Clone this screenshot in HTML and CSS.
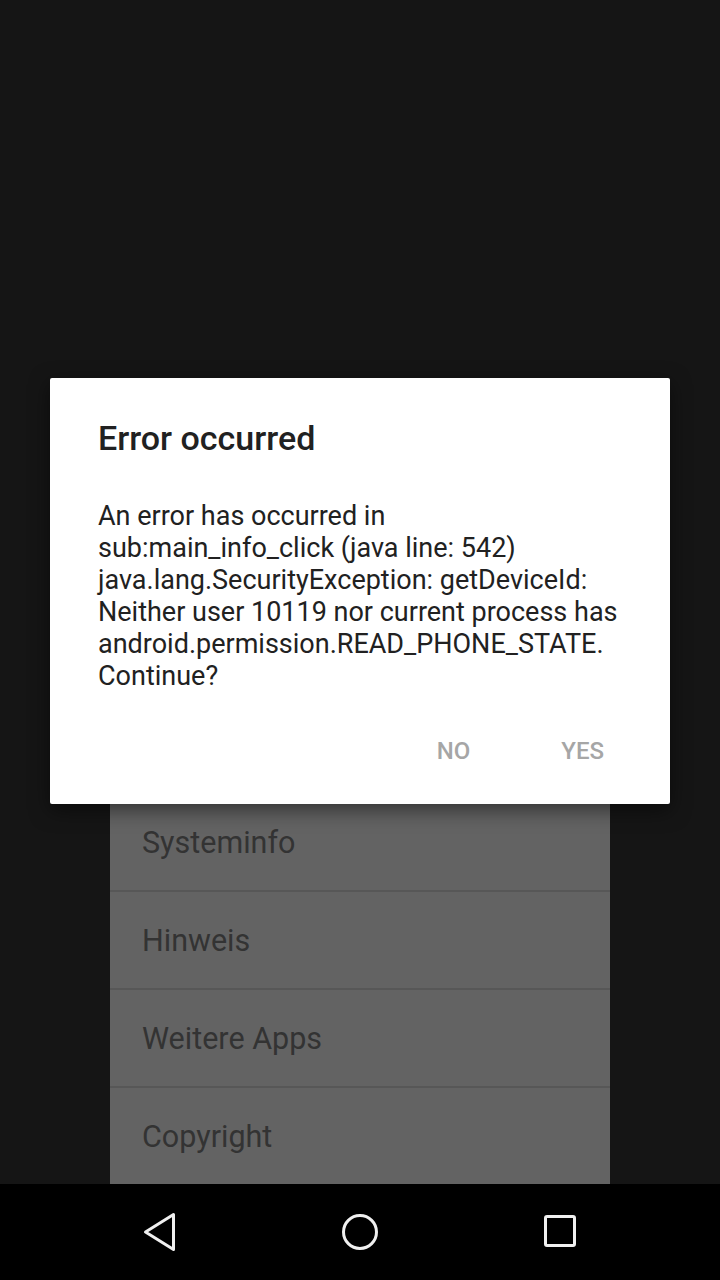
FILE: index.html
```html
<!DOCTYPE html>
<html lang="en">
<head>
    <meta charset="UTF-8">
    <meta name="viewport" content="width=device-width, initial-scale=1.0">
    <title>Error occurred</title>
    <link rel="stylesheet" href="styles.css">
</head>
<body>
    <div class="screen">
        <div class="content">
            <div class="menu-panel">
                <div class="menu-item">Einstellungen</div>
                <div class="menu-item">Systeminfo</div>
                <div class="menu-item">Hinweis</div>
                <div class="menu-item">Weitere Apps</div>
                <div class="menu-item">Copyright</div>
            </div>
        </div>
        <div class="nav-bar">
            <svg class="nav-icon" width="48" height="48" viewBox="0 0 48 48">
                <path d="M37.5 6.5 L37.5 41.5 L9.5 24 Z" fill="none" stroke="#f0f0f0" stroke-width="3" stroke-linejoin="round"/>
            </svg>
            <svg class="nav-icon" width="48" height="48" viewBox="0 0 48 48">
                <circle cx="24" cy="24" r="16.5" fill="none" stroke="#f0f0f0" stroke-width="3"/>
            </svg>
            <svg class="nav-icon" width="48" height="48" viewBox="0 0 48 48">
                <rect x="9.5" y="8.5" width="29" height="29" rx="1.5" fill="none" stroke="#f0f0f0" stroke-width="3"/>
            </svg>
        </div>
    </div>

    <div class="dialog">
        <h2 class="dialog-title">Error occurred</h2>
        <p class="dialog-message">An error has occurred in<br>sub:main_info_click (java line: 542)<br>java.lang.SecurityException: getDeviceId:<br>Neither user 10119 nor current process has<br>android.permission.READ_PHONE_STATE.<br>Continue?</p>
        <div class="dialog-buttons">
            <button class="dialog-button">No</button>
            <button class="dialog-button">Yes</button>
        </div>
    </div>
</body>
</html>
```

FILE: styles.css
```css
html, body {
    margin: 0;
    height: 100%;
}
body {
    font-family: Roboto, "Noto Sans", sans-serif;
    background-color: #151515;
    overflow: hidden;
}
.screen {
    display: flex;
    flex-direction: column;
    height: 1280px;
}
.content {
    flex: 1;
    display: flex;
    flex-direction: column;
    justify-content: flex-end;
    align-items: center;
    overflow: hidden;
}
.menu-panel {
    width: 500px;
    background-color: #636363;
}
.menu-item {
    height: 96px;
    border-bottom: 2px solid #575757;
    padding-left: 32px;
    display: flex;
    align-items: center;
    font-size: 30.5px;
    color: #333333;
}
.menu-item:last-child {
    border-bottom: none;
}
.nav-bar {
    height: 96px;
    background-color: #000;
    display: flex;
    justify-content: center;
    align-items: center;
    gap: 152px;
}
.nav-icon {
    display: block;
}

/* dialog sits over the dimmed screen */
.dialog {
    position: absolute;
    left: 50px;
    top: 378px;
    width: 620px;
    height: 426px;
    box-sizing: border-box;
    background-color: #fff;
    border-radius: 2px;
    padding: 38px 48px 0 48px;
    box-shadow: 0 6px 20px rgba(0,0,0,0.5);
}
.dialog-title {
    margin: 0;
    font-size: 34px;
    font-weight: 500;
    line-height: 44px;
    color: #212121;
}
.dialog-message {
    margin: 40px 0 0 0;
    font-size: 27px;
    line-height: 32px;
    color: #212121;
}
.dialog-buttons {
    display: flex;
    justify-content: flex-end;
    gap: 59px;
    margin: 35px 2px 0 0;
}
.dialog-button {
    font-family: Roboto, sans-serif;
    font-size: 24px;
    font-weight: 500;
    text-transform: uppercase;
    color: #a6a6a6;
    background: none;
    border: none;
    padding: 10px 16px;
}
```
